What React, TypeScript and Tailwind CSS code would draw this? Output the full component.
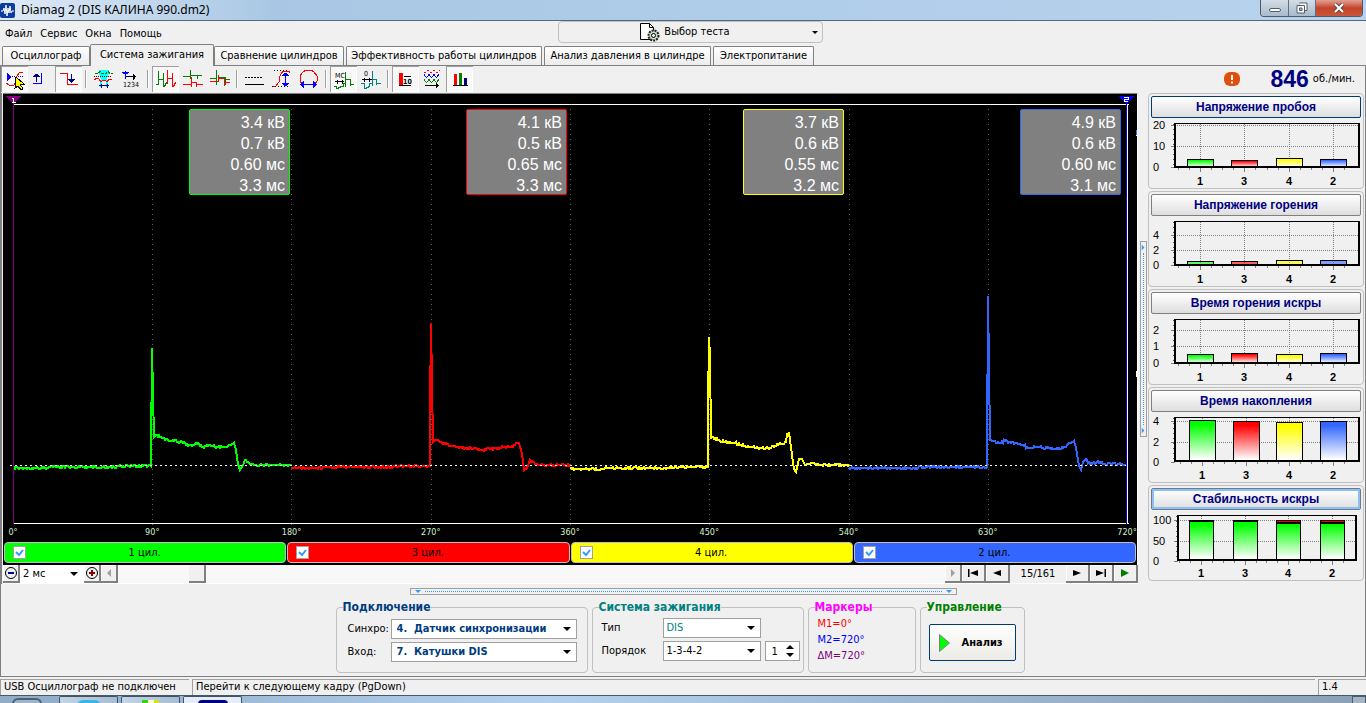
import type {ReactNode} from "react";

const GREEN = "#00ff00";
const RED = "#ff0000";
const YELLOW = "#ffff00";
const BLUE = "#3366ff";

type Point = [number, number];

interface Cylinder {
  id: number;
  color: string;
  fill: string;
  border: string;
  values: string[];
  trace: Point[];
}

const CYLINDERS: Cylinder[] = [
  {
    id: 1,
    color: GREEN,
    fill: "bg-[#00ff00]",
    border: "border-[#00ff00]",
    values: ["3.4 кВ", "0.7 кВ", "0.60 мс", "3.3 мс"],
    trace: [
      [10, 374], [148, 372], [148, 364], [149, 254], [150, 300], [151, 343], [153, 341], [160, 344], [167, 347],
      [181, 348], [185, 352], [195, 349], [199, 353], [207, 351], [215, 353], [223, 353], [228, 351], [231, 349],
      [233, 356], [235, 370], [237, 376], [240, 371], [242, 366], [247, 370], [253, 371], [288, 371],
    ],
  },
  {
    id: 3,
    color: RED,
    fill: "bg-[#ff0000]",
    border: "border-[#ff0000]",
    values: ["4.1 кВ", "0.5 кВ", "0.65 мс", "3.3 мс"],
    trace: [
      [288, 374], [427, 372], [427, 314], [428, 229], [429, 289], [430, 348], [434, 346], [442, 350], [449, 352],
      [465, 354], [480, 356], [495, 354], [509, 352], [516, 349], [519, 360], [521, 376], [524, 374], [527, 366],
      [532, 370], [540, 371], [567, 371],
    ],
  },
  {
    id: 4,
    color: YELLOW,
    fill: "bg-[#ffff00]",
    border: "border-[#ffff00]",
    values: ["3.7 кВ", "0.6 кВ", "0.55 мс", "3.2 мс"],
    trace: [
      [567, 375], [705, 373], [705, 312], [706, 243], [707, 262], [708, 344], [710, 343], [717, 347], [732, 349],
      [742, 352], [755, 354], [767, 354], [775, 351], [783, 348], [784, 340], [786, 339], [787, 346], [789, 361],
      [791, 375], [793, 378], [796, 365], [799, 365], [802, 371], [809, 369], [817, 371], [846, 371],
    ],
  },
  {
    id: 2,
    color: BLUE,
    fill: "bg-[#3366ff]",
    border: "border-[#3366ff]",
    values: ["4.9 кВ", "0.6 кВ", "0.60 мс", "3.1 мс"],
    trace: [
      [846, 374], [984, 373], [984, 361], [985, 202], [986, 273], [987, 346], [997, 349], [1002, 347], [1012, 349],
      [1020, 351], [1025, 354], [1034, 353], [1052, 355], [1061, 353], [1065, 350], [1071, 347], [1073, 354],
      [1076, 372], [1078, 376], [1080, 368], [1083, 365], [1087, 370], [1094, 368], [1102, 370], [1124, 370],
    ],
  },
];

const AXIS = ["0°", "90°", "180°", "270°", "360°", "450°", "540°", "630°", "720°"];
const GRID_X = [149, 288, 428, 567, 706, 846, 985];

// Resamples the trace every pixel and adds a repeatable one-pixel jitter.
function tracePath(points: Point[]): string {
  let d = `M${points[0][0]} ${points[0][1]}`;
  for (let i = 1; i < points.length; i++) {
    const [x0, y0] = points[i - 1];
    const [x1, y1] = points[i];
    if (x1 - x0 > 3) {
      for (let x = x0 + 1; x < x1; x++) {
        const n = Math.abs(Math.sin(x * 12.9898) * 43758.5453) % 1;
        const jitter = n < 0.25 ? -1 : n > 0.75 ? 1 : 0;
        d += `L${x} ${Math.round(y0 + ((y1 - y0) * (x - x0)) / (x1 - x0)) + jitter}`;
      }
    }
    d += `L${x1} ${y1}`;
  }
  return d;
}

interface Tab {
  label: string;
  width: string;
}

const TABS: Tab[] = [
  {label: "Осциллограф", width: "w-[88px]"},
  {label: "Система зажигания", width: "w-[124px]"},
  {label: "Сравнение цилиндров", width: "w-[130px]"},
  {label: "Эффективность работы цилиндров", width: "w-[196px]"},
  {label: "Анализ давления в цилиндре", width: "w-[167px]"},
  {label: "Электропитание", width: "w-[101px]"},
];

interface Tool {
  label: string;
  pressed?: boolean;
  icon: ReactNode;
}

const TOOLS: Tool[][] = [
  [
    {
      label: "Курсор",
      pressed: true,
      icon: (
        <>
          <path d="M6 7v8l5-4z" fill="#00f" />
          <path d="M11 10.500h11" stroke="#00f" strokeDasharray="1 1" />
          <path d="M5 17l3 2h5l2-3 1-6 3-4h3" stroke="#f00" />
          <path d="M15 11l8 7h-4l3 5-2 1-3-4-3 2z" fill="#ff0" stroke="#000" />
        </>
      ),
    },
    {
      label: "Фронт",
      icon: (
        <>
          <path d="M5 17.500h8v-11" stroke="#00f" />
          <path d="M8.500 16v-8M5 10.500h7M6 9.500h5M7 8.500h3" stroke="#000080" />
        </>
      ),
    },
    {
      label: "Спад",
      pressed: true,
      icon: (
        <>
          <path d="M5 7.500h7.500v11h10" stroke="#f00" />
          <path d="M16.500 8v9M13 13.500h7M14 14.500h5M15 15.500h3" stroke="#000080" />
        </>
      ),
    },
  ],
  [
    {
      label: "Окно",
      icon: (
        <>
          <path d="M9 4h10v3l-2 6v1h-6v-1l-2-6zM10 14h2v7h-2zM16 14h2v7h-2z" fill="#0ff" />
          <path d="M5 7.500h3l2-2h1l1 2h4l1-2h1l2 2h3" stroke="#008000" strokeDasharray="3 1" />
          <path d="M4 10.500h18" stroke="#000" strokeDasharray="1 1" />
          <path d="M4 14l3-2 2 1 2 3 2-2h2l2 2 2-3 3 1" stroke="#f00" />
          <path d="M9 19.500h10M11 17.500v4M17 17.500v4" stroke="#000080" />
        </>
      ),
    },
    {
      label: "Нумерация",
      icon: (
        <>
          <path d="M5 6.500h7M6 7.500h5M8.500 5v8" stroke="#00f" />
          <path d="M9 10.500h10M16 7.500v6M17 8.500v4" stroke="#000" />
          <text x="6" y="21" fontSize="7" fill="#000">1234</text>
        </>
      ),
    },
  ],
  [
    {
      label: "Парад",
      pressed: true,
      icon: (
        <>
          <path d="M4 18.500h2.500v-14M7 13.500h5M11.500 7v13.500h1l2-4" stroke="#008000" />
          <path d="M15.500 4v14M16 12.500h5M20.500 7v13.500h1l2-4" stroke="#f00" />
        </>
      ),
    },
    {
      label: "Растр",
      icon: (
        <>
          <path d="M4 10.500h7v-7v9M11 9.500h7v3M18 9.500h5" stroke="#008000" />
          <path d="M4 18.500h8v-8v10M12 16.500h5v4M17 18.500h7" stroke="#f00" />
        </>
      ),
    },
    {
      label: "Наложение",
      icon: (
        <>
          <path d="M4 15.500h8v-7M13 12.500h5v7M18 16.500h6" stroke="#f00" />
          <path d="M4 12.500h6v-9v15M12 11.500h7v7M19 13.500h5" stroke="#008000" />
        </>
      ),
    },
  ],
  [
    {
      label: "Линии",
      icon: (
        <>
          <path d="M4 11.500h18" stroke="#000" strokeDasharray="2 1" />
          <path d="M4 18.500h19" stroke="#000" />
        </>
      ),
    },
    {
      label: "Амплитуда",
      icon: (
        <>
          <path d="M5 20h3l3-4 1-6 3-5h6l1 2" stroke="#f00" />
          <path d="M6 4.500h14M4 20.500h16" stroke="#000" strokeDasharray="1 2" />
          <path d="M17.500 7v12M14 9.500h7M15 8.500h5M16 7.500h3M14 17.500h7M15 18.500h5M16 19.500h3" stroke="#00f" />
        </>
      ),
    },
    {
      label: "Период",
      icon: (
        <>
          <path d="M7 18l-2-3v-5l3-4 3-2h5l3 2 3 4v5l-2 3" stroke="#f00" />
          <path d="M6 18.500h15" stroke="#00f" />
          <path d="M5 18.500l4-4v8zM22 18.500l-4-4v8z" fill="#00f" />
        </>
      ),
    },
  ],
  [
    {
      label: "Миллисекунды",
      pressed: true,
      icon: (
        <>
          <text x="5" y="12" fontSize="7" fill="#000">МС</text>
          <path d="M5 15.500h9M7 13.500v4M12 13.500v4" stroke="#000" />
          <path d="M4 20.500h2.500v2h1l4-2h2v-3h2v-12v15M16 13.500h4v6M20 18.500h4" stroke="#008000" />
        </>
      ),
    },
    {
      label: "Градусы",
      icon: (
        <>
          <text x="7" y="10" fontSize="7" fill="#000">0</text>
          <path d="M5 13.500h10M7 11.500v4M12 11.500v4" stroke="#000" />
          <path d="M4 17.500h3.500v5h1l4-2v-3h3v-13v15M16 13.500h3.500v5M20 17.500h4" stroke="#008080" />
        </>
      ),
    },
  ],
  [
    {
      label: "Значения",
      pressed: true,
      icon: (
        <>
          <path d="M7 7h4v13h-4z" fill="#f00" />
          <path d="M12 10.500h7M7 19.500h12" stroke="#000" />
          <text x="11" y="18" fontSize="7" fontWeight="bold" fill="#000">10</text>
        </>
      ),
    },
    {
      label: "Кадры",
      icon: (
        <>
          <path d="M5 6.500h2M8 4.500h2M11 6.500h2M14 4.500h2M17 6.500h2M20 4.500h1" stroke="#f00" />
          <path d="M5 8.500l2.500 3 2.500-3 2.500 3 2.500-3 2.500 3 2.500-3" stroke="#00f" />
          <path d="M5 13.500l2.500 3 2.500-3 2.500 3 2.500-3 2.500 3 2.500-3" stroke="#008000" />
          <path d="M6 19.500h14M17.500 17v5M18.500 18v3" stroke="#000" />
        </>
      ),
    },
    {
      label: "Диаграммы",
      pressed: true,
      icon: (
        <>
          <path d="M8 8h3v11h-3z" fill="#f00" />
          <path d="M13 7h3v12h-3z" fill="#008000" />
          <path d="M18 12h3v7h-3z" fill="#000080" />
          <path d="M7 19.500h15" stroke="#000" />
        </>
      ),
    },
  ],
];

interface Bar {
  x: number;
  top: number;
  color: string;
  capped?: boolean;
}

interface ChartData {
  title: string;
  button: string;
  left: number;
  right: number;
  top: number;
  bottom: number;
  barWidth: number;
  labels: {text: string; y: number}[];
  bars: Bar[];
}

const CHARTS: ChartData[] = [
  {
    title: "Напряжение пробоя",
    button: "border-[#003c74]",
    left: 24, right: 208, top: 5, bottom: 48, barWidth: 26,
    labels: [{text: "20", y: 6}, {text: "10", y: 27}, {text: "0", y: 48}],
    bars: [{x: 49, top: 40, color: GREEN}, {x: 93, top: 41, color: RED}, {x: 138, top: 39, color: YELLOW}, {x: 182, top: 40, color: BLUE}],
  },
  {
    title: "Напряжение горения",
    button: "border-[#808080]",
    left: 24, right: 208, top: 5, bottom: 48, barWidth: 26,
    labels: [{text: "4", y: 18}, {text: "2", y: 33}, {text: "0", y: 48}],
    bars: [{x: 49, top: 44, color: GREEN}, {x: 93, top: 44, color: RED}, {x: 138, top: 43, color: YELLOW}, {x: 182, top: 43, color: BLUE}],
  },
  {
    title: "Время горения искры",
    button: "border-[#808080]",
    left: 24, right: 208, top: 5, bottom: 48, barWidth: 26,
    labels: [{text: "2", y: 15}, {text: "1", y: 31}, {text: "0", y: 48}],
    bars: [{x: 49, top: 39, color: GREEN}, {x: 93, top: 38, color: RED}, {x: 138, top: 39, color: YELLOW}, {x: 182, top: 38, color: BLUE}],
  },
  {
    title: "Время накопления",
    button: "border-[#808080]",
    left: 24, right: 208, top: 5, bottom: 48, barWidth: 26,
    labels: [{text: "4", y: 8}, {text: "2", y: 29}, {text: "0", y: 49}],
    bars: [{x: 51, top: 7, color: GREEN}, {x: 95, top: 8, color: RED}, {x: 138, top: 9, color: YELLOW}, {x: 182, top: 8, color: BLUE}],
  },
  {
    title: "Стабильность искры",
    button: "border-[#6c7a89] ring-2 ring-inset ring-[#8cc0f5]",
    left: 27, right: 205, top: 5, bottom: 49, barWidth: 24,
    labels: [{text: "100", y: 9}, {text: "50", y: 30}, {text: "0", y: 50}],
    bars: [{x: 50, top: 9, color: GREEN}, {x: 94, top: 9, color: GREEN}, {x: 137, top: 9, color: GREEN, capped: true}, {x: 181, top: 9, color: GREEN, capped: true}],
  },
];

const BAR_NAMES = ["1", "3", "4", "2"];
const BAR_FILLS: Record<string, string> = {[GREEN]: "url(#bar-green)", [RED]: "url(#bar-red)", [YELLOW]: "url(#bar-yellow)", [BLUE]: "url(#bar-blue)"};

function Triangle({className}: {className: string}): React.JSX.Element {
  return (
    <svg viewBox="0 0 8 4" className={className} aria-hidden="true">
      <path d="M0 0h8l-4 4z" fill="currentColor" />
    </svg>
  );
}

function TitleBar(): React.JSX.Element {
  return (
    <header className="flex h-[21px] justify-between overflow-hidden border-b border-[#56697c] bg-linear-to-r from-[#dfeaf6] via-[#a9c7e4] via-20% to-[#b8d3ee]">
      <div className="flex items-center gap-[6px]">
        <svg viewBox="0 0 15 15" className="h-[15px] w-[15px]" aria-hidden="true">
          <rect width="15" height="15" rx="2" fill="#0a3d9c" />
          <path d="M1 8h2l1-3 1 6 1-9 1 11 1-8 1 5 1-7 1 7 1-2h2" stroke="#fff" fill="none" />
        </svg>
        <h1 className="font-[family-name:'Noto_Sans',sans-serif] text-xs whitespace-pre text-black">Diamag 2 (DIS КАЛИНА 990.dm2)</h1>
      </div>
      <div className="mr-[3px] flex h-[17px] overflow-hidden rounded-b border border-t-0 border-[#4a5a6a]">
        <button type="button" aria-label="Свернуть" className="flex w-7 items-end justify-center border-r border-[#5f6f80] bg-linear-to-b from-[#d5dde6] to-[#a9bacb] pb-1">
          <span className="h-[4px] w-3 rounded-xs border border-[#535e6b] bg-white" />
        </button>
        <button type="button" aria-label="Восстановить" className="flex w-[27px] items-center justify-center border-r border-[#5f6f80] bg-linear-to-b from-[#d5dde6] to-[#a9bacb]">
          <svg viewBox="0 0 12 12" className="h-3 w-3" aria-hidden="true">
            <path d="M3.500 1h7.500v7.500h-2M1 3.500h7.500v7.500h-7.500z" fill="#fff" stroke="#535e6b" />
            <path d="M3.500 6h2.500v2.500h-2.500z" fill="#a9bacb" stroke="#535e6b" />
          </svg>
        </button>
        <button type="button" aria-label="Закрыть" className="flex w-[46px] items-center justify-center bg-linear-to-b from-[#e0a193] via-[#c5412a] to-[#c9573a]">
          <svg viewBox="0 0 12 10" className="h-[10px] w-3" aria-hidden="true">
            <path d="M2 1l8 8M10 1l-8 8" stroke="#5a4a4a" strokeWidth="4" />
            <path d="M2 1l8 8M10 1l-8 8" stroke="#fff" strokeWidth="2" />
          </svg>
        </button>
      </div>
    </header>
  );
}

function MenuBar(): React.JSX.Element {
  return (
    <div className="grid h-[23px] grid-cols-[1fr_265px_1fr] items-start">
      <nav className="flex h-6 items-center gap-2 pt-[2px] pl-[5px]">
        {["Файл", "Сервис", "Окна", "Помощь"].map((item) => (
          <button key={item} type="button">{item}</button>
        ))}
      </nav>
      <button type="button" className="ml-[7px] flex h-[22px] w-[265px] items-center rounded border border-[#c0c0c0] pr-1">
        <span className="flex flex-1 items-center justify-center gap-1">
          <svg viewBox="0 0 20 19" className="h-[19px] w-5" aria-hidden="true">
            <path d="M.5.5h9l4 4v12h-13z" fill="#fff" stroke="#000" />
            <path d="M9.500.5v4h4" fill="none" stroke="#000" />
            <circle cx="13.500" cy="12.500" r="5" fill="#c5dcc5" stroke="#222" strokeWidth="2" strokeDasharray="2 1" />
            <circle cx="13.500" cy="12.500" r="2" fill="#fff" stroke="#000" />
          </svg>
          Выбор теста
        </span>
        <Triangle className="h-[3px] w-[6px]" />
      </button>
    </div>
  );
}

function TabStrip(): React.JSX.Element {
  return (
    <div role="tablist" className="flex h-[22px] items-end border-b border-[#808080] pl-[2px]">
      {TABS.map((tab, i) => (
        <button
          key={tab.label}
          type="button"
          role="tab"
          aria-selected={i === 1}
          className={`${tab.width} shrink-0 rounded-t-xs border border-b-0 border-[#808080] whitespace-nowrap ${
            i === 1 ? "-mb-px h-[22px] bg-[#f0f0f0] pb-[1px]" : "h-[19px] bg-linear-to-b from-white to-[#ececec]"
          } ${i > 2 ? "ml-[2px]" : ""}`}
        >
          {tab.label}
        </button>
      ))}
    </div>
  );
}

function Toolbar(): React.JSX.Element {
  return (
    <div className="flex h-[27px] items-start justify-between">
      <div className="flex">
        {TOOLS.map((group, i) => (
          <div key={i} className="flex">
            {i > 0 && <span className="mx-[3px] my-1 w-[2px] border-r border-l border-r-white border-l-[#a0a0a0]" />}
            {group.map((tool) => (
              <button
                key={tool.label}
                type="button"
                aria-label={tool.label}
                className={`h-[26px] w-[27px] ${tool.pressed ? "bg-[#f8f8f8] shadow-[inset_1px_1px_0_#a0a0a0,inset_-1px_-1px_0_#fff]" : ""}`}
              >
                <svg viewBox="0 0 27 26" className="h-[26px] w-[27px]" fill="none" shapeRendering="crispEdges" aria-hidden="true">
                  {tool.icon}
                </svg>
              </button>
            ))}
          </div>
        ))}
      </div>
      <div className="flex h-[26px] items-center pr-[10px]">
        <svg viewBox="0 0 16 14" className="mr-[30px] h-[14px] w-4" aria-label="Внимание">
          <rect width="16" height="14" rx="6" fill="#e0500c" />
          <path d="M8 3v5M8 9.500v2" stroke="#fff" strokeWidth="2" />
        </svg>
        <span className="font-[family-name:'Liberation_Sans',sans-serif] text-[23px] leading-6 font-bold text-[#000080]">846</span>
        <span className="ml-1">об./мин.</span>
      </div>
    </div>
  );
}

function Scope(): React.JSX.Element {
  return (
    <section className="border-t border-r border-t-[#808080] border-r-white bg-black">
      <div className="relative">
        <svg viewBox="0 0 1134 432" preserveAspectRatio="none" className="block h-[432px] w-full" fill="none" shapeRendering="crispEdges" aria-label="Осциллограмма">
          <path d="M10 10.500h1116M10 429.500h1116" stroke="#fff" />
          {GRID_X.map((x) => (
            <path key={x} d={`M${x}.5 15v416`} stroke="#606060" strokeDasharray="1 4" />
          ))}
          {CYLINDERS.map((c) => (
            <path key={c.id} d={tracePath(c.trace)} stroke={c.color} strokeWidth="2" />
          ))}
          <path d="M7 371.500h1118" stroke="#fff" strokeDasharray="2 3" />
          <path d="M10.500 5v425" stroke="#800080" />
          <path d="M1123.500 5v425" stroke="#00f" />
          <path d="M1124.500 10v420" stroke="#fff" />
          <path d="M3 2h15l-7.500 8z" fill="#800080" />
          <path d="M1116 2h15l-7.500 8z" fill="#00f" />
          <path d="M9 4h1.500v4M9 8.500h4M1121 3.500h4v2h-4v2h4" stroke="#fff" />
          <path d="M1133.500 36v5" stroke={BLUE} />
          <path d="M1133.500 41v1M1133.500 277v6" stroke="#fff" />
        </svg>
        <div className="absolute top-[15px] right-4 left-[10px] grid grid-cols-4">
          {CYLINDERS.map((c) => (
            <div
              key={c.id}
              className={`w-[101px] justify-self-end rounded-xs border bg-[#808080] pt-[2px] pr-1 text-right font-[family-name:'Liberation_Sans',sans-serif] text-base leading-[21px] text-white ${c.border} h-[86px]`}
            >
              {c.values.map((value) => (
                <p key={value}>{value}</p>
              ))}
            </div>
          ))}
        </div>
      </div>
      <div className="flex h-4 justify-between overflow-hidden pt-px pr-[10px] pl-[10px] text-[9px] leading-[11px] text-[#d8f0d0]">
        {AXIS.map((label) => (
          <span key={label} className="flex w-0 justify-center">{label}</span>
        ))}
      </div>
      <div className="grid grid-cols-4 gap-px px-px pb-[2px]">
        {CYLINDERS.map((c) => (
          <label key={c.id} className={`flex h-[21px] items-center rounded border border-[#c0c0c0] pr-[22px] pl-2 ${c.fill}`}>
            <span className="grid">
              <input type="checkbox" defaultChecked className="peer col-start-1 row-start-1 h-[13px] w-[13px] appearance-none border border-[#a0a0a0] bg-white" />
              <svg viewBox="0 0 13 13" className="pointer-events-none col-start-1 row-start-1 hidden h-[13px] w-[13px] peer-checked:block" aria-hidden="true">
                <path d="M3 6l3 3 4-5" fill="none" stroke="#3399ff" strokeWidth="2" />
              </svg>
            </span>
            <span className="flex-1 text-center">{c.id} цил.</span>
          </label>
        ))}
      </div>
    </section>
  );
}

interface StepButtonProps {
  label: string;
  wide?: boolean;
  children: ReactNode;
}

function StepButton({label, wide, children}: StepButtonProps): React.JSX.Element {
  return (
    <button
      type="button"
      aria-label={label}
      className={`flex h-[18px] shrink-0 items-center justify-center border-r-2 border-b-2 border-[#808080] bg-[#f0f0f0] shadow-[inset_1px_1px_0_#fff] ${wide ? "w-6" : "w-[17px]"}`}
    >
      <svg viewBox="0 0 12 12" className="h-3 w-3" fill="currentColor" aria-hidden="true">
        {children}
      </svg>
    </button>
  );
}

function ScrollRow(): React.JSX.Element {
  return (
    <div className="flex h-[19px] items-start border-b border-white">
      <StepButton label="Уменьшить масштаб">
        <circle cx="6" cy="6" r="5.500" fill="none" stroke="#000" />
        <path d="M3 5h6v2h-6z" fill="#000080" />
      </StepButton>
      <div className="relative h-[18px] w-16 bg-white">
        <select aria-label="Развёртка" className="h-[18px] w-full appearance-none pl-[3px]">
          <option>2 мс</option>
        </select>
        <Triangle className="pointer-events-none absolute top-[7px] right-[6px] h-1 w-2" />
      </div>
      <StepButton label="Увеличить масштаб">
        <circle cx="6" cy="6" r="5.500" fill="none" stroke="#000" />
        <path d="M3 5h2v-2h2v2h2v2h-2v2h-2v-2h-2z" fill="#800000" />
      </StepButton>
      <StepButton label="Прокрутить назад">
        <path d="M8 2v8l-4-4z" fill="#a0a0a0" />
      </StepButton>
      <input
        type="range"
        aria-label="Кадр"
        min={1}
        max={161}
        defaultValue={15}
        className="h-[18px] min-w-0 flex-1 appearance-none bg-[#f8f8f8] [&::-webkit-slider-thumb]:h-[18px] [&::-webkit-slider-thumb]:w-[17px] [&::-webkit-slider-thumb]:appearance-none [&::-webkit-slider-thumb]:border-r-2 [&::-webkit-slider-thumb]:border-b-2 [&::-webkit-slider-thumb]:border-[#808080] [&::-webkit-slider-thumb]:bg-[#f0f0f0]"
      />
      <StepButton label="Прокрутить вперёд">
        <path d="M4 2v8l4-4z" fill="#a0a0a0" />
      </StepButton>
      <StepButton label="Первый кадр" wide>
        <path d="M1 2h1.500v8h-1.500zM3 6l8-3v6z" />
      </StepButton>
      <StepButton label="Предыдущий кадр" wide>
        <path d="M2 6l8-3v6z" />
      </StepButton>
      <span className="w-14 text-center leading-[18px]">15/161</span>
      <StepButton label="Следующий кадр" wide>
        <path d="M10 6l-8-3v6z" />
      </StepButton>
      <StepButton label="Последний кадр" wide>
        <path d="M11 2h-1.500v8h1.500zM9 6l-8-3v6z" />
      </StepButton>
      <StepButton label="Воспроизвести" wide>
        <path d="M10 6l-8-4v8z" fill="#008000" />
      </StepButton>
    </div>
  );
}

function BarChart({chart}: {chart: ChartData}): React.JSX.Element {
  const {left, right, top, bottom, barWidth} = chart;
  return (
    <section className="h-24 rounded border border-[#c0c0c0] px-[2px] pt-[2px]">
      <button
        type="button"
        className={`block h-[22px] w-full rounded-xs border bg-linear-to-b from-white to-[#dedede] font-[family-name:'Liberation_Sans',sans-serif] text-xs leading-5 font-bold text-[#000080] ${chart.button}`}
      >
        {chart.title}
      </button>
      <svg viewBox="0 0 210 70" className="mt-px block w-full font-[family-name:'Liberation_Sans',sans-serif]" fill="none" shapeRendering="crispEdges" aria-label={chart.title}>
        <g stroke="#808080" strokeDasharray="1 1">
          {chart.labels.slice(0, 2).map((l) => (
            <path key={l.text} d={`M${left} ${l.y}.5H${right}`} />
          ))}
          {chart.bars.map((b) => (
            <path key={b.x} d={`M${b.x}.5 ${top}V${bottom}`} />
          ))}
        </g>
        {chart.labels.map((l) => (
          <path key={l.text} d={`M${left - 4} ${l.y}.5h4`} stroke="#808080" />
        ))}
        <path d={`M${left - 1}.5 ${top}V${bottom}`} stroke="#606060" strokeWidth="3" strokeDasharray="1 4" />
        {chart.bars.map((b) => (
          <path key={b.x} d={`M${b.x}.5 ${bottom}v5M${b.x - 11}.5 ${bottom}v3M${b.x + 11}.5 ${bottom}v3M${b.x - 22}.5 ${bottom}v3`} stroke="#808080" />
        ))}
        {chart.bars.map((b) => (
          <g key={b.x}>
            {bottom - b.top < 7 ? (
              <rect x={b.x - barWidth / 2 + 0.5} y={b.top + 0.5} width={barWidth} height={bottom - b.top} fill={b.color} fillOpacity="0.6" stroke="#000" />
            ) : (
              <rect x={b.x - barWidth / 2 + 0.5} y={b.top + 0.5} width={barWidth} height={bottom - b.top} fill={BAR_FILLS[b.color]} stroke="#000" />
            )}
            {chart.button.includes("ring") && (
              <path d={`M${b.x - barWidth / 2} ${b.top + (b.capped ? 3 : 1)}h${barWidth + 1}`} stroke="#000" strokeWidth="2" />
            )}
            {b.capped && <path d={`M${b.x - barWidth / 2 + 1} ${b.top + 1}.5h${barWidth - 1}`} stroke={RED} />}
          </g>
        ))}
        <path d={`M${left - 1} ${top - 0.5}H${right + 1}`} stroke="#000" />
        <path d={`M${left} ${top - 1}V${bottom}H${right}V${top - 1}`} stroke="#000" strokeWidth="2" />
        {chart.labels.map((l) => (
          <text key={l.text} x="2" y={l.y + 4} fontSize="11" fill="#000">{l.text}</text>
        ))}
        {chart.bars.map((b, i) => (
          <text key={b.x} x={b.x} y="66" fontSize="11" fontWeight="bold" textAnchor="middle" fill="#000">{BAR_NAMES[i]}</text>
        ))}
      </svg>
    </section>
  );
}

function Sidebar(): React.JSX.Element {
  return (
    <aside className="mr-px flex w-[216px] shrink-0 flex-col gap-[2px]">
      <svg className="absolute h-0 w-0" aria-hidden="true">
        {[["bar-green", GREEN], ["bar-red", RED], ["bar-yellow", YELLOW], ["bar-blue", BLUE]].map(([id, color]) => (
          <linearGradient key={id} id={id} x1="0" y1="0" x2="0" y2="1">
            <stop offset="0.100" stopColor={color} />
            <stop offset="0.950" stopColor="#ffffff" />
          </linearGradient>
        ))}
      </svg>
      {CHARTS.map((chart) => (
        <BarChart key={chart.title} chart={chart} />
      ))}
    </aside>
  );
}

interface SelectBoxProps {
  id: string;
  value: string;
  width: string;
  tone?: string;
}

function SelectBox({id, value, width, tone = "pl-[3px] text-black"}: SelectBoxProps): React.JSX.Element {
  return (
    <div className={`relative ${width}`}>
      <select id={id} className={`block h-5 w-full appearance-none border border-[#a0a0a0] bg-white ${tone}`}>
        <option>{value}</option>
      </select>
      <Triangle className="pointer-events-none absolute top-2 right-[6px] h-1 w-2" />
    </div>
  );
}

interface PanelProps {
  title: string;
  tone: string;
  width: string;
  children: ReactNode;
}

function Panel({title, tone, width, children}: PanelProps): React.JSX.Element {
  return (
    <fieldset className={`${width} h-[72px] rounded border border-[#c0c0c0] pr-[2px] pl-[6px]`}>
      <legend className={`text-xs leading-[13px] font-bold whitespace-nowrap ${tone}`}>{title}</legend>
      {children}
    </fieldset>
  );
}

function ControlPanel(): React.JSX.Element {
  return (
    <section className="flex h-[92px] flex-col items-center pt-[4px]">
      <div className="flex h-[7px] w-[547px] items-center gap-1 border border-[#a0a0a0] px-1 text-[#3399ff]">
        <Triangle className="h-[3px] w-[6px]" />
        <span className="flex-1 border-t border-dotted border-[#3399ff]" />
        <Triangle className="h-[3px] w-[6px]" />
      </div>
      <div className="flex gap-1 pt-[6px] pr-[6px]">
        <Panel title="Подключение" tone="text-[#003c80]" width="w-[252px]">
          <div className="grid grid-cols-[43px_1fr] items-center gap-y-[3px] pt-[5px] pl-[5px]">
            <label htmlFor="sync">Синхро:</label>
            <SelectBox id="sync" value={"4.\u00a0\u00a0Датчик синхронизации"} width="w-[186px]" tone="pl-[5px] font-bold text-[#003c80]" />
            <label htmlFor="input">Вход:</label>
            <SelectBox id="input" value={"7.\u00a0\u00a0Катушки DIS"} width="w-[186px]" tone="pl-[5px] font-bold text-[#003c80]" />
          </div>
        </Panel>
        <Panel title="Система зажигания" tone="text-[#008080]" width="w-[212px]">
          <div className="grid grid-cols-[61px_1fr] items-center gap-y-[3px] pt-[4px] pl-[3px]">
            <label htmlFor="type">Тип</label>
            <SelectBox id="type" value="DIS" width="w-[98px]" tone="pl-[3px] text-[#008080]" />
            <label htmlFor="order">Порядок</label>
            <div className="flex gap-1">
              <SelectBox id="order" value="1-3-4-2" width="w-[98px]" />
              <div className="relative">
                <input aria-label="Номер" defaultValue="1" className="block h-5 w-[35px] border border-[#a0a0a0] bg-white pl-[6px]" />
                <svg viewBox="0 0 8 14" className="pointer-events-none absolute top-[3px] right-[6px] h-[14px] w-2" aria-hidden="true">
                  <path d="M0 5h8l-4-4zM0 9h8l-4 4z" fill="#000" />
                </svg>
              </div>
            </div>
          </div>
        </Panel>
        <Panel title="Маркеры" tone="text-[#ff00ff]" width="w-[108px]">
          <div className="pt-[2px] pl-[3px] leading-4">
            <p className="text-[#ff0000]">М1=0°</p>
            <p className="text-[#0000ff]">М2=720°</p>
            <p className="text-[#800080]">ΔМ=720°</p>
          </div>
        </Panel>
        <Panel title="Управление" tone="text-[#008000]" width="w-[105px]">
          <button type="button" className="mt-[10px] ml-[2px] flex h-[37px] w-[87px] items-center gap-3 rounded-xs border border-[#003c74] bg-linear-to-b from-white to-[#ecebe5] pl-[9px] font-bold">
            <svg viewBox="0 0 11 18" className="h-[18px] w-[11px]" aria-hidden="true">
              <path d="M.5.5v17l10-8.500z" fill="#00ff00" stroke="#808080" />
            </svg>
            Анализ
          </button>
        </Panel>
      </div>
    </section>
  );
}

function StatusBar(): React.JSX.Element {
  return (
    <footer className="flex h-[18px] gap-[3px] pt-[2px] leading-[14px] [&>p]:border-t [&>p]:border-l [&>p]:border-[#a0a0a0] [&>p]:pl-[3px]">
      <p className="w-[189px]">USB Осциллограф не подключен</p>
      <p className="flex-1">Перейти к следующему кадру (PgDown)</p>
      <p className="w-12">1.4</p>
    </footer>
  );
}

function Taskbar(): React.JSX.Element {
  const item = "flex h-2 w-[59px] justify-center overflow-hidden rounded-t-xs border border-b-0 border-[#3f5468] bg-linear-to-r from-[#c3d5e6] to-[#a8bdd0] pt-[3px]";
  return (
    <div className="flex h-[9px] items-end gap-[3px] overflow-hidden border-t border-[#46586a] bg-linear-to-r from-[#8fabc6] via-[#b4d0ec] via-40% to-[#8ba0b5]">
      <span className="ml-3 h-[6px] w-[30px] rounded-t-full border-2 border-b-0 border-[#4b6175] bg-[#9fb4c6]" />
      <span className={`${item} ml-[14px]`}>
        <span className="h-3 w-6 rounded-full bg-[#3db4e6]" />
      </span>
      <span className={item}>
        <span className="h-3 w-[6px] bg-[#35d318]" />
        <span className="h-3 w-[6px] bg-[#ffffd0]" />
        <span className="h-3 w-[5px] bg-[#d8e020]" />
      </span>
      <span className="flex h-2 w-[59px] justify-center overflow-hidden rounded-t-xs border border-b-0 border-[#3f5468] bg-[#e4edf6] pt-[3px]">
        <span className="h-3 w-[30px] rounded bg-[#000080]" />
      </span>
      <span className="ml-auto h-2 w-[14px] border border-[#4b5d6e] bg-[#a5b4c2]" />
    </div>
  );
}

export default function App(): React.JSX.Element {
  return (
    <div className="min-h-screen overflow-hidden bg-[#f0f0f0] font-[family-name:'DejaVu_Sans_Condensed','Noto_Sans',sans-serif] text-[11px] leading-4 text-black">
      <TitleBar />
      <MenuBar />
      <TabStrip />
      <main className="border-r border-b border-l border-[#808080]">
        <Toolbar />
        <div className="flex">
          <div className="min-w-0 flex-1 border-l border-[#808080] pl-px">
            <Scope />
            <ScrollRow />
          </div>
          <div className="flex w-[10px] shrink-0 items-center justify-center">
            <div className="flex h-[196px] w-[7px] flex-col items-center gap-1 border border-[#a0a0a0] py-1 text-[#3399ff]">
              <Triangle className="h-[3px] w-[6px] -rotate-90" />
              <span className="flex-1 border-l border-dotted border-[#3399ff]" />
              <Triangle className="h-[3px] w-[6px] -rotate-90" />
            </div>
          </div>
          <Sidebar />
        </div>
        <ControlPanel />
      </main>
      <StatusBar />
      <Taskbar />
    </div>
  );
}
